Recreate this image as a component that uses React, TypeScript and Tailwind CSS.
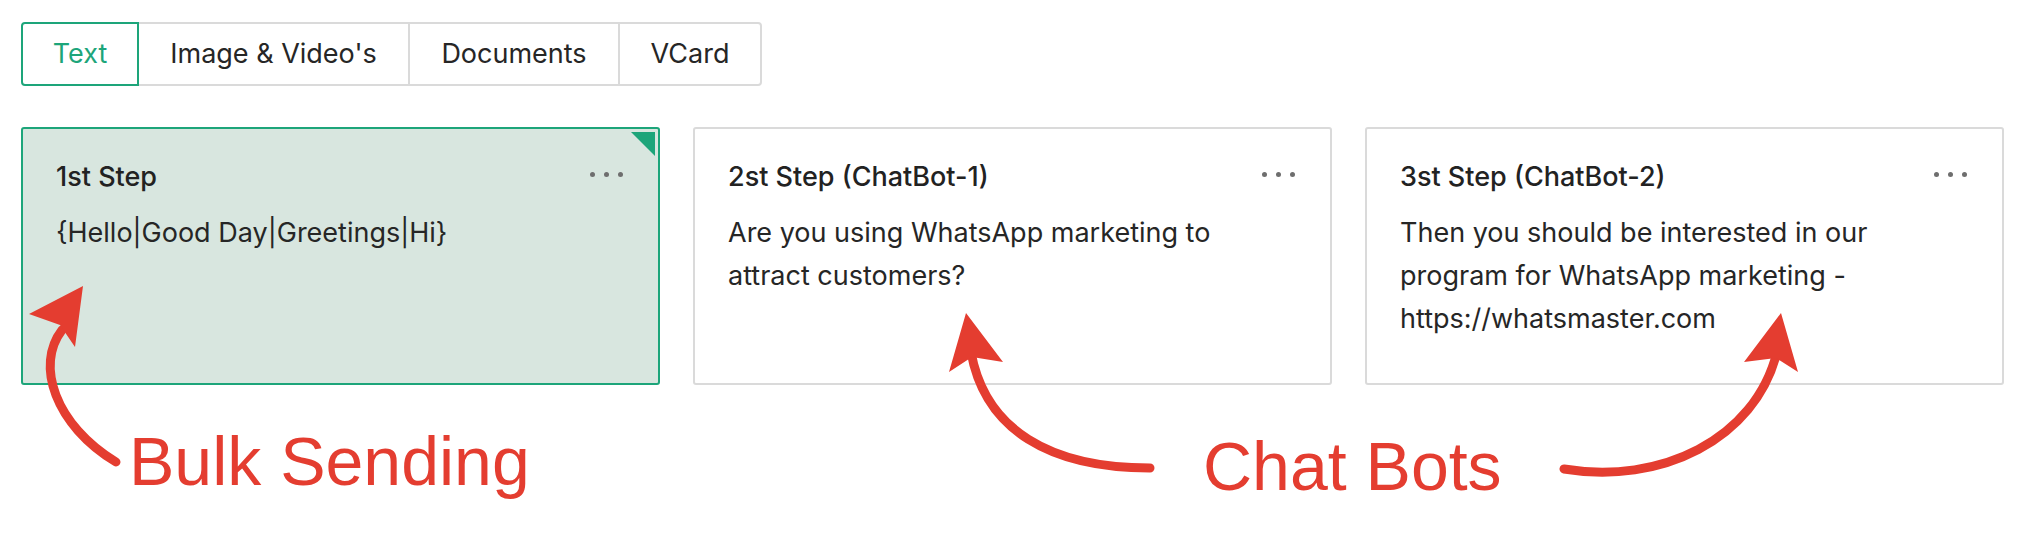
import React, { useState } from 'react';

const tabs = [
  { label: 'Text', w: 'w-[118px]' },
  { label: "Image & Video's", w: 'w-[273px]' },
  { label: 'Documents', w: 'w-[212px]' },
  { label: 'VCard', w: 'w-[144px]' },
];

const steps = [
  { title: '1st Step', body: '{Hello|Good Day|Greetings|Hi}', active: true },
  { title: '2st Step (ChatBot-1)', body: 'Are you using WhatsApp marketing to attract customers?', active: false },
  {
    title: '3st Step (ChatBot-2)',
    body: 'Then you should be interested in our program for WhatsApp marketing - https://whatsmaster.com',
    active: false,
  },
];

function Dots() {
  return (
    <div className="flex items-center gap-[8.5px] -mt-[5px]">
      <span className="w-[5.5px] h-[5.5px] rounded-full bg-[#6e6e6e]" />
      <span className="w-[5.5px] h-[5.5px] rounded-full bg-[#6e6e6e]" />
      <span className="w-[5.5px] h-[5.5px] rounded-full bg-[#6e6e6e]" />
    </div>
  );
}

function StepCard({ title, body, active }: { title: string; body: string; active: boolean }) {
  return (
    <div
      className={
        active
          ? 'relative h-[258px] border-2 border-[#1da57a] rounded-[3px] bg-[#d8e6df] pl-[33px] pt-[30px]'
          : 'relative h-[258px] border-2 border-[#dadada] rounded-[3px] bg-white pl-[33px] pt-[30px]'
      }
    >
      {active && (
        <div className="absolute top-[3px] right-[3px] w-[24px] h-[24px] bg-[#1da57a] [clip-path:polygon(0_0,100%_0,100%_100%)]" />
      )}
      <div className="flex items-center justify-between pr-[35px]">
        <h3 className="text-[27px] leading-[36px] font-medium text-[#222]">{title}</h3>
        <Dots />
      </div>
      <p className="mt-[16px] pr-[60px] text-[27px] leading-[43px] text-[#262626]">{body}</p>
    </div>
  );
}

export default function App() {
  const [tab, setTab] = useState(0);

  return (
    <div className="relative w-[2038px] h-[552px] bg-white overflow-hidden font-['Inter',sans-serif]">
      <div className="pl-[21px] pt-[22px]">
        {/* Message type tabs */}
        <div className="flex">
          {tabs.map((t, i) => (
            <button
              key={t.label}
              onClick={() => setTab(i)}
              className={[
                t.w,
                'h-[64px] flex items-center justify-center border-2 text-[27px]',
                i > 0 ? '-ml-[2px]' : '',
                i === 0 ? 'rounded-l-[4px]' : '',
                i === tabs.length - 1 ? 'rounded-r-[4px]' : '',
                tab === i
                  ? 'relative z-10 border-[#1da57a] text-[#1da57a]'
                  : 'border-[#dadada] text-[#262626]',
              ].join(' ')}
            >
              {t.label}
            </button>
          ))}
        </div>

        {/* Steps */}
        <div className="mt-[41px] w-[1983px] grid grid-cols-3 gap-[33px]">
          {steps.map(s => (
            <StepCard key={s.title} {...s} />
          ))}
        </div>
      </div>

      {/* Annotations */}
      <svg className="absolute inset-0 pointer-events-none" width="2038" height="552" viewBox="0 0 2038 552">
        <g fill="none" stroke="#e43d30" strokeWidth="9" strokeLinecap="round">
          <path d="M116 462 C55 425 35 365 62 330" />
          <path d="M1150 468 C1050 468 985 430 971 352" />
          <path d="M1564 469 C1660 485 1755 440 1777 352" />
        </g>
        <g fill="#e43d30">
          <polygon points="83,286 29,314 60,325 75,347" />
          <polygon points="966,313 949,372 972,357 1003,362" />
          <polygon points="1781,313 1744,362 1776,358 1798,372" />
        </g>
      </svg>
      <div className="absolute left-[129px] top-[427px] text-[68px] leading-[68px] text-[#e43d30] font-['Liberation_Sans',Arial,sans-serif] whitespace-nowrap">
        Bulk Sending
      </div>
      <div className="absolute left-[1203px] top-[432px] text-[68px] leading-[68px] text-[#e43d30] font-['Liberation_Sans',Arial,sans-serif] whitespace-nowrap">
        Chat Bots
      </div>
    </div>
  );
}
